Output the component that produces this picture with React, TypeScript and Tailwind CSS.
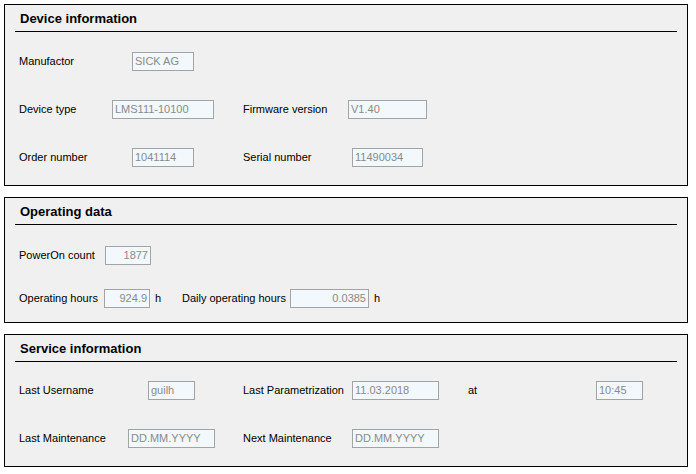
const FONT = "font-['Liberation_Sans','Arial',sans-serif]";

type FieldProps = {
  value: string;
  w: string;
  right?: boolean;
};

function Field({ value, w, right }: FieldProps) {
  return (
    <div
      className={`${w} h-[19px] shrink-0 border border-[#a3a3a3] bg-[#f2f8fc] px-[2px] text-[11px] leading-[17px] text-[#8a8a8a] ${
        right ? "text-right" : "text-left"
      }`}
    >
      {value}
    </div>
  );
}

function Panel({
  title,
  h,
  children,
}: {
  title: string;
  h: string;
  children: React.ReactNode;
}) {
  return (
    <div className={`${h} w-[684px] border border-black bg-[#f0f0f0]`}>
      <div className="mx-[10px] h-[27px] border-b border-black pl-[5px] pt-[6px] text-[13px] font-bold leading-[16px] text-black">
        {title}
      </div>
      {children}
    </div>
  );
}

export default function App() {
  return (
    <div className={`${FONT} min-h-[474px] w-[696px] bg-white pl-[4px] pt-[4px] text-[11px] text-black`}>
      <Panel title="Device information" h="h-[182px]">
        <div className="mt-[20px] flex flex-col gap-[29px] pl-[14px]">
          <div className="flex h-[19px] items-center">
            <span className="w-[113px] shrink-0">Manufactor</span>
            <Field value="SICK AG" w="w-[62px]" />
          </div>
          <div className="flex h-[19px] items-center">
            <div className="flex w-[224px] shrink-0 items-center">
              <span className="w-[93px] shrink-0">Device type</span>
              <Field value="LMS111-10100" w="w-[102px]" />
            </div>
            <span className="w-[105px] shrink-0">Firmware version</span>
            <Field value="V1.40" w="w-[79px]" />
          </div>
          <div className="flex h-[19px] items-center">
            <div className="flex w-[224px] shrink-0 items-center">
              <span className="w-[113px] shrink-0">Order number</span>
              <Field value="1041114" w="w-[62px]" />
            </div>
            <span className="w-[109px] shrink-0">Serial number</span>
            <Field value="11490034" w="w-[71px]" />
          </div>
        </div>
      </Panel>

      <div className="mt-[11px]">
        <Panel title="Operating data" h="h-[126px]">
          <div className="mt-[21px] flex flex-col gap-[24px] pl-[14px]">
            <div className="flex h-[19px] items-center">
              <span className="w-[86px] shrink-0">PowerOn count</span>
              <Field value="1877" w="w-[46px]" right />
            </div>
            <div className="flex h-[19px] items-center">
              <span className="w-[85px] shrink-0">Operating hours</span>
              <Field value="924.9" w="w-[46px]" right />
              <span className="w-[32px] shrink-0 pl-[5px]">h</span>
              <span className="w-[108px] shrink-0">Daily operating hours</span>
              <Field value="0.0385" w="w-[79px]" right />
              <span className="pl-[5px]">h</span>
            </div>
          </div>
        </Panel>
      </div>

      <div className="mt-[11px]">
        <Panel title="Service information" h="h-[133px]">
          <div className="mt-[19px] flex flex-col gap-[29px] pl-[14px]">
            <div className="flex h-[19px] items-center">
              <div className="flex w-[224px] shrink-0 items-center">
                <span className="w-[129px] shrink-0">Last Username</span>
                <Field value="guilh" w="w-[47px]" />
              </div>
              <span className="w-[109px] shrink-0">Last Parametrization</span>
              <Field value="11.03.2018" w="w-[87px]" />
              <span className="w-[157px] shrink-0 pl-[29px]">at</span>
              <Field value="10:45" w="w-[47px]" />
            </div>
            <div className="flex h-[19px] items-center">
              <div className="flex w-[224px] shrink-0 items-center">
                <span className="w-[109px] shrink-0">Last Maintenance</span>
                <Field value="DD.MM.YYYY" w="w-[87px]" />
              </div>
              <span className="w-[109px] shrink-0">Next Maintenance</span>
              <Field value="DD.MM.YYYY" w="w-[87px]" />
            </div>
          </div>
        </Panel>
      </div>
    </div>
  );
}
